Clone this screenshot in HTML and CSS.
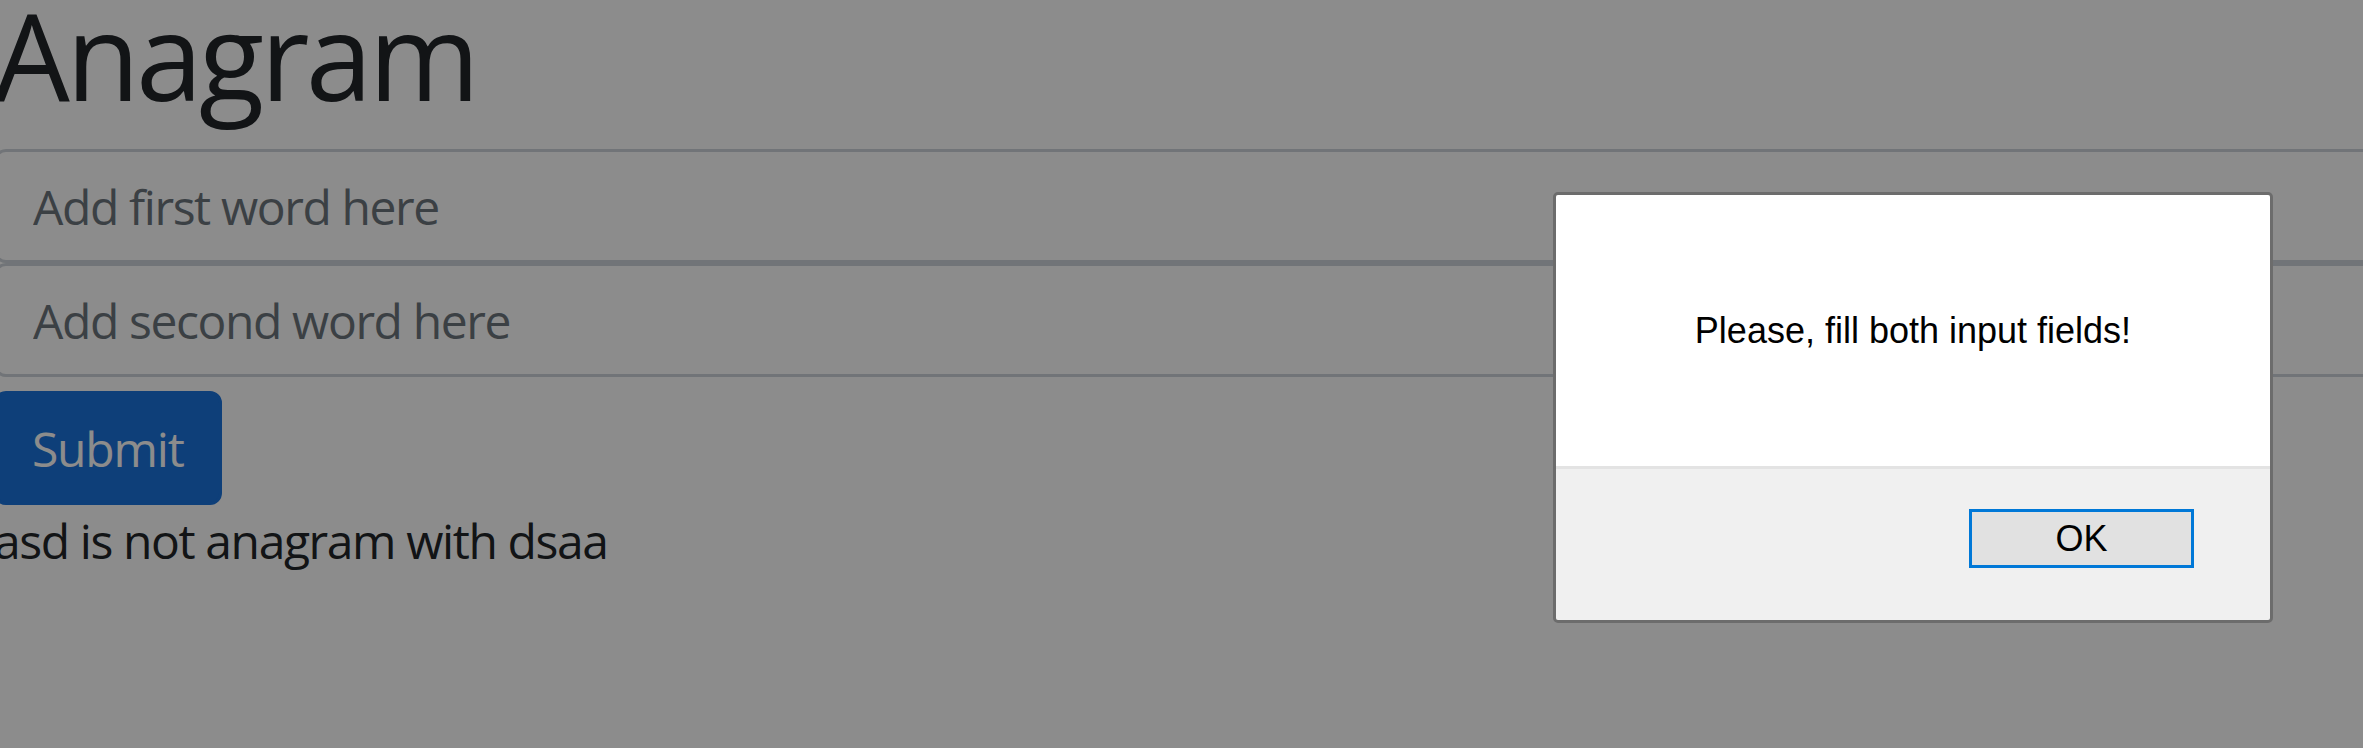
FILE: index.html
```html
<!DOCTYPE html>
<html lang="en">
<head>
<meta charset="utf-8">
<title>Anagram</title>
<link rel="stylesheet" href="styles.css">
</head>
<body>
<div class="page">
  <h1 class="title">Anagram</h1>
  <form class="form">
    <input class="field" type="text" placeholder="Add first word here">
    <input class="field" type="text" placeholder="Add second word here">
    <button class="btn-submit" type="button">Submit</button>
  </form>
  <div class="result">asd is not anagram with dsaa</div>
</div>

<div class="backdrop"></div>

<div class="alert-dialog" role="alertdialog">
  <div class="alert-body">
    <p class="alert-message">Please, fill both input fields!</p>
  </div>
  <div class="alert-footer">
    <button class="alert-ok" type="button">OK</button>
  </div>
</div>
</body>
</html>
```
FILE: styles.css
```css
html, body {
  margin: 0;
  padding: 0;
  background: #ffffff;
  overflow: hidden;
  height: 100%;
}

.page {
  margin-left: -6px;
  margin-right: -40px;
  font-family: "Open Sans", "Noto Sans", sans-serif;
  color: #212529;
}

.title {
  margin: -17px 0 22px 0;
  font-size: 120px;
  line-height: 144px;
  font-weight: 400;
  letter-spacing: -3.7px;
  color: #212529;
}

.form {
  display: flex;
  flex-direction: column;
  align-items: flex-start;
  margin: 0;
}

.field {
  box-sizing: border-box;
  display: block;
  width: 100%;
  height: 114px;
  margin: 0;
  padding: 0 36px;
  border: 3px solid #ced4da;
  border-radius: 12px;
  background: #ffffff;
  font-family: "Open Sans", "Noto Sans", sans-serif;
  font-size: 48px;
  letter-spacing: -1.4px;
  color: #495057;
  outline: none;
}

.field::placeholder {
  color: #6c757d;
  opacity: 1;
}

.btn-submit {
  box-sizing: border-box;
  margin-top: 14px;
  height: 114px;
  padding: 0 35px;
  border: 3px solid #1a73dc;
  border-radius: 12px;
  background: #1a73dc;
  color: #ffffff;
  font-family: "Open Sans", "Noto Sans", sans-serif;
  font-size: 48px;
  letter-spacing: -1.2px;
  cursor: pointer;
}

.result {
  font-size: 48px;
  line-height: 72px;
  letter-spacing: -1.4px;
  color: #212529;
}

.backdrop {
  position: fixed;
  inset: 0;
  background: rgba(0, 0, 0, 0.45);
}

.alert-dialog {
  position: fixed;
  left: 1553px;
  top: 192px;
  width: 720px;
  height: 431px;
  box-sizing: border-box;
  border: 3px solid #6c6c6c;
  border-radius: 5px;
  overflow: hidden;
  display: flex;
  flex-direction: column;
  font-family: "Liberation Sans", Arial, sans-serif;
  color: #000000;
}

.alert-body {
  height: 271px;
  background: #ffffff;
  border-bottom: 3px solid #e3e3e3;
  display: flex;
  align-items: center;
  justify-content: center;
}

.alert-message {
  margin: 0;
  font-size: 36px;
  line-height: normal;
}

.alert-footer {
  flex: 1;
  background: #f0f0f0;
  display: flex;
  justify-content: flex-end;
  align-items: flex-start;
  padding: 40px 76px 0 0;
}

.alert-ok {
  box-sizing: border-box;
  width: 225px;
  height: 59px;
  margin: 0;
  padding: 0;
  border: 3px solid #0078d7;
  background: #e1e1e1;
  font-family: "Liberation Sans", Arial, sans-serif;
  font-size: 36px;
  color: #000000;
}
```
